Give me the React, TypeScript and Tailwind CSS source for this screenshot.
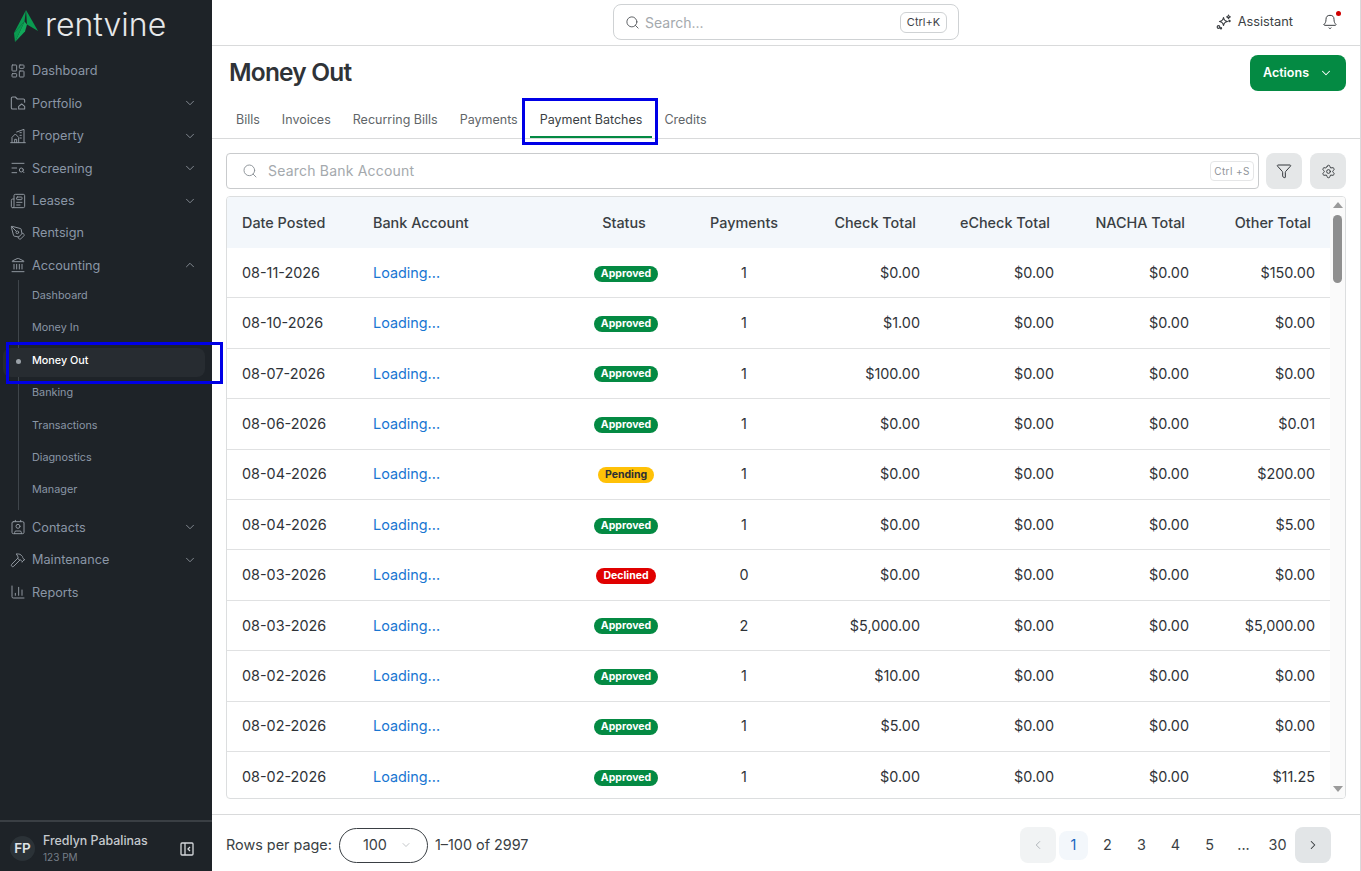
import {
  Bell,
  ChartColumn,
  ChevronDown,
  ChevronLeft,
  ChevronRight,
  ChevronUp,
  Contact,
  Funnel,
  Hammer,
  Landmark,
  LayoutDashboard,
  Newspaper,
  PenTool,
  Search,
  Settings,
  TextSearch,
} from 'lucide-react'
import type { ReactNode } from 'react'

const FolderHome = () => (
  <svg width="16" height="16" viewBox="0 0 24 24" fill="none" stroke="currentColor" strokeWidth="1.6" strokeLinecap="round" strokeLinejoin="round">
    <path d="M10 21H4a2 2 0 0 1-2-2V5a2 2 0 0 1 2-2h4l3 3h9a2 2 0 0 1 2 2v3" />
    <path d="M13 17l4.500-3.500L22 17v4h-9z" />
  </svg>
)

const PropertyIcon = () => (
  <svg width="16" height="16" viewBox="0 0 24 24" fill="none" stroke="currentColor" strokeWidth="1.5" strokeLinecap="round" strokeLinejoin="round">
    <path d="M1 22h22" />
    <path d="M3 22v-8l5-5 5 5v8" />
    <path d="M10 6l11-4v20" />
    <path d="M15 7h2M15 11h2M15 15h2M7 22v-5h3v5" />
  </svg>
)

const CollapseIcon = () => (
  <svg width="14" height="14" viewBox="0 0 14 14" fill="none" stroke="currentColor" strokeWidth="1.3">
    <rect x="1" y="1" width="12" height="12" rx="1" />
    <path d="M5 1v12" />
    <path d="M10 5L8 7l2 2" />
  </svg>
)

const AssistantIcon = () => (
  <svg width="16" height="16" viewBox="0 0 16 16" fill="none" stroke="#3b3f43" strokeWidth="1.2" strokeLinejoin="round">
    <path d="M7.500 3.500c.4 2.700 1.300 3.600 4 4-2.700.4-3.600 1.300-4 4-.4-2.700-1.300-3.600-4-4 2.700-.4 3.600-1.300 4-4z" />
    <path d="M12.500 1c.2 1.200.6 1.600 1.800 1.800-1.200.2-1.600.6-1.800 1.800-.2-1.200-.6-1.600-1.800-1.800 1.200-.2 1.600-.6 1.800-1.800z" />
    <circle cx="2.500" cy="13" r="1.300" />
    <circle cx="5" cy="14.300" r=".6" />
    <circle cx="13.500" cy="7" r=".6" />
  </svg>
)

const Logo = () => (
  <svg width="24" height="32" viewBox="0 0 24 32" fill="none">
    <path d="M12 0L24 21 13 14.500z" fill="#0a9a50" />
    <path d="M12 0L10.500 11.500 0 23z" fill="#0a9a50" />
    <path d="M10.500 11.500L13 14.500l-2 7L1 32z" fill="#12a85a" />
    <path d="M0 23L10.500 11.500 1 32z" fill="#0a9a50" />
  </svg>
)

interface NavEntry {
  label: string
  icon: ReactNode
  caret?: 'down' | 'up'
}

const topNav: NavEntry[] = [
  { label: 'Dashboard', icon: <LayoutDashboard size={16} strokeWidth={1.5} /> },
  { label: 'Portfolio', icon: <FolderHome />, caret: 'down' },
  { label: 'Property', icon: <PropertyIcon />, caret: 'down' },
  { label: 'Screening', icon: <TextSearch size={16} strokeWidth={1.5} />, caret: 'down' },
  { label: 'Leases', icon: <Newspaper size={16} strokeWidth={1.5} />, caret: 'down' },
  { label: 'Rentsign', icon: <PenTool size={16} strokeWidth={1.5} /> },
  { label: 'Accounting', icon: <Landmark size={16} strokeWidth={1.5} />, caret: 'up' },
]

const bottomNav: NavEntry[] = [
  { label: 'Contacts', icon: <Contact size={16} strokeWidth={1.5} />, caret: 'down' },
  { label: 'Maintenance', icon: <Hammer size={16} strokeWidth={1.5} />, caret: 'down' },
  { label: 'Reports', icon: <ChartColumn size={16} strokeWidth={1.5} /> },
]

const subNav = ['Dashboard', 'Money In', 'Money Out', 'Banking', 'Transactions', 'Diagnostics', 'Manager']

const tabs = ['Bills', 'Invoices', 'Recurring Bills', 'Payments', 'Payment Batches', 'Credits']

type Status = 'Approved' | 'Pending' | 'Declined'

const rows: [string, Status, string, string, string, string, string][] = [
  ['08-11-2026', 'Approved', '1', '$0.00', '$0.00', '$0.00', '$150.00'],
  ['08-10-2026', 'Approved', '1', '$1.00', '$0.00', '$0.00', '$0.00'],
  ['08-07-2026', 'Approved', '1', '$100.00', '$0.00', '$0.00', '$0.00'],
  ['08-06-2026', 'Approved', '1', '$0.00', '$0.00', '$0.00', '$0.01'],
  ['08-04-2026', 'Pending', '1', '$0.00', '$0.00', '$0.00', '$200.00'],
  ['08-04-2026', 'Approved', '1', '$0.00', '$0.00', '$0.00', '$5.00'],
  ['08-03-2026', 'Declined', '0', '$0.00', '$0.00', '$0.00', '$0.00'],
  ['08-03-2026', 'Approved', '2', '$5,000.00', '$0.00', '$0.00', '$5,000.00'],
  ['08-02-2026', 'Approved', '1', '$10.00', '$0.00', '$0.00', '$0.00'],
  ['08-02-2026', 'Approved', '1', '$5.00', '$0.00', '$0.00', '$0.00'],
  ['08-02-2026', 'Approved', '1', '$0.00', '$0.00', '$0.00', '$11.25'],
]

const statusClass: Record<Status, string> = {
  Approved: 'bg-[#048a43] text-white',
  Pending: 'bg-[#ffc107] text-[#2c2f33]',
  Declined: 'bg-[#e00000] text-white',
}

const gridCols = 'grid grid-cols-[130px_203px_130px_108px_137px_134px_135px_126px] items-center'

function NavRow({ entry }: { entry: NavEntry }) {
  return (
    <div className="flex h-[32.4px] items-center pl-[10px] pr-[15px] text-[12.7px] text-[#8a96a6]">
      <span className="flex w-[22px] shrink-0 text-[#8f969e]">{entry.icon}</span>
      <span className="flex-1">{entry.label}</span>
      {entry.caret === 'down' && <ChevronDown size={14} strokeWidth={1.5} className="text-[#8f969e]" />}
      {entry.caret === 'up' && <ChevronUp size={14} strokeWidth={1.5} className="text-[#8f969e]" />}
    </div>
  )
}

function Sidebar() {
  return (
    <aside className="flex h-full w-[212px] shrink-0 flex-col bg-[#1e2328]">
      <div className="flex h-[54.8px] items-center gap-[7px] pb-[3px] pl-[14px]">
        <Logo />
        <span className="pb-[2px] text-[32px] leading-none font-light text-[#e6e8ea]">rentvine</span>
      </div>
      <nav className="flex-1">
        {topNav.map((entry) => (
          <NavRow key={entry.label} entry={entry} />
        ))}
        <div className="mt-[-1.6px] mb-[1px] ml-[18px] border-l border-[#3f454b] pb-[3.5px]">
          {subNav.map((label) =>
            label === 'Money Out' ? (
              <div key={label} className="relative flex h-[32.4px] items-center pl-[13px] text-[10.8px] font-medium text-white">
                <span className="absolute top-[3px] -left-[16px] h-[29px] w-[202px] rounded-lg bg-[#272c31]" />
                <span className="absolute top-[14px] -left-[3px] h-[5px] w-[5px] rounded-full bg-[#9aa1a8]" />
                <span className="relative">{label}</span>
              </div>
            ) : (
              <div key={label} className="flex h-[32.4px] items-center pl-[13px] text-[10.8px] text-[#8a96a6]">
                {label}
              </div>
            ),
          )}
        </div>
        {bottomNav.map((entry) => (
          <NavRow key={entry.label} entry={entry} />
        ))}
      </nav>
      <div className="flex h-[51px] items-center border-t-2 border-[#3a3f44] pt-[4px] pr-[18px] pl-[10px]">
        <div className="flex h-[25px] w-[25px] items-center justify-center rounded-full bg-[#2b3237] text-[13.5px] font-semibold text-[#dfe2e5]">
          FP
        </div>
        <div className="ml-[8px] flex-1 leading-none">
          <div className="text-[12.4px] font-medium text-[#c5c9ce]">Fredlyn Pabalinas</div>
          <div className="mt-[4px] text-[10px] text-[#777f88]">123 PM</div>
        </div>
        <span className="text-[#d5d8db]">
          <CollapseIcon />
        </span>
      </div>
    </aside>
  )
}

function TopBar() {
  return (
    <header className="relative flex h-[46px] shrink-0 items-start justify-center border-b border-[#d9dadb] pt-[4px]">
      <div className="flex h-[36px] w-[346px] items-center rounded-lg border border-[#cfd2d4] pr-[11px] pl-[11px]">
        <Search size={15} strokeWidth={1.5} className="text-[#55595d]" />
        <span className="ml-[5px] flex-1 text-[14px] text-[#a4a9ad]">Search...</span>
        <span className="flex h-[21px] w-[47px] items-center justify-center rounded-md border border-[#cfd2d4] text-[11px] text-[#3f4347]">Ctrl+K</span>
      </div>
      <div className="absolute top-0 right-0 flex h-[44px] items-center pr-[22px]">
        <AssistantIcon />
        <span className="ml-[6px] text-[12.8px] text-[#3b3f43]">Assistant</span>
        <span className="relative ml-[29px] flex">
          <Bell size={16} strokeWidth={1.5} className="text-[#3b3f43]" />
          <span className="absolute -top-[3px] -right-[3px] h-[5px] w-[5px] rounded-full bg-[#d00000]" />
        </span>
      </div>
    </header>
  )
}

function PageHeader() {
  return (
    <div className="shrink-0 border-b border-[#d9dadb]">
      <div className="flex h-[56px] items-start justify-between pt-[9px] pr-[14px] pl-[17px]">
        <h1 className="-mt-px text-[24.500px] leading-[36px] font-semibold tracking-[-0.8px] text-[#2f3338]">Money Out</h1>
        <button className="flex h-[36px] w-[96px] items-center justify-center gap-[10px] rounded-lg bg-[#048a43] text-[12.500px] font-semibold text-white">
          Actions
          <ChevronDown size={14} strokeWidth={1.8} />
        </button>
      </div>
      <div className="flex gap-[2px] pl-[14px]">
        {tabs.map((tab) => (
          <div
            key={tab}
            className={
              tab === 'Payment Batches'
                ? 'flex h-[36px] items-center border-b-2 border-[#048a43] px-[10px] pt-[2px] text-[12.5px] text-[#3a3f44]'
                : 'flex h-[36px] items-center border-b-2 border-transparent px-[10px] pt-[2px] text-[12.5px] text-[#5f6569]'
            }
          >
            {tab}
          </div>
        ))}
      </div>
    </div>
  )
}

function Toolbar() {
  return (
    <div className="mt-[14px] flex h-[36px] shrink-0 gap-[7px] pr-[14px] pl-[14px]">
      <div className="flex flex-1 items-center rounded border border-[#c9cbcd] pr-[4px] pl-[15px]">
        <Search size={16} strokeWidth={1.4} className="text-[#8a9096]" />
        <span className="ml-[10px] flex-1 pb-[2px] text-[14px] tracking-[0.2px] text-[#a4a9ad]">Search Bank Account</span>
        <span className="flex h-[20px] w-[44px] items-center justify-center rounded border border-[#e5e6e7] text-[10px] tracking-[0.4px] text-[#8f9499]">Ctrl +S</span>
      </div>
      <button className="flex h-[36px] w-[36px] items-center justify-center rounded-lg bg-[#e5e7e8] text-[#33373b]">
        <Funnel size={16} strokeWidth={1.5} />
      </button>
      <button className="ml-[1px] flex h-[36px] w-[36px] items-center justify-center rounded-lg bg-[#e5e7e8] text-[#33373b]">
        <Settings size={15} strokeWidth={1.5} />
      </button>
    </div>
  )
}

function Scrollbar() {
  return (
    <div className="flex w-[15px] shrink-0 flex-col items-center bg-[#fafafa]">
      <span className="mt-[5px] h-0 w-0 border-x-[5px] border-b-[6px] border-x-transparent border-b-[#9a9a9a]" />
      <span className="mt-[7px] h-[68px] w-[9px] rounded-full bg-[#8f8f8f]" />
      <span className="mt-auto mb-[6px] h-0 w-0 border-x-[5px] border-t-[6px] border-x-transparent border-t-[#9a9a9a]" />
    </div>
  )
}

function Table() {
  return (
    <div className="mt-[7px] mr-[14px] ml-[14px] flex h-[603px] shrink-0 overflow-hidden rounded border border-[#dcdedf]">
      <div className="w-[1103px] shrink-0 overflow-hidden text-[14.4px] text-[#2f3338]">
        <div className={`${gridCols} h-[51px] bg-[#f3f7fb] font-medium text-[#3a3f44]`}>
          <div className="pl-[15px]">Date Posted</div>
          <div className="pl-[16px]">Bank Account</div>
          <div className="pr-[2px] text-center">Status</div>
          <div className="text-center">Payments</div>
          <div className="pr-[19px] text-right">Check Total</div>
          <div className="pr-[19px] text-right">eCheck Total</div>
          <div className="pr-[19px] text-right">NACHA Total</div>
          <div className="pr-[19px] text-right">Other Total</div>
        </div>
        {rows.map((row, i) => (
          <div key={i} className={`${gridCols} h-[50.4px] border-b border-[#e0e1e2]`}>
            <div className="pl-[15px]">{row[0]}</div>
            <div className="pl-[16px] text-[#1976d2]">Loading...</div>
            <div className="flex justify-center pt-[2px] pl-[2px]">
              <span className={`rounded-full px-[7px] text-[10.5px] leading-[16px] font-bold ${statusClass[row[1]]}`}>{row[1]}</span>
            </div>
            <div className="text-center">{row[2]}</div>
            <div className="pr-[15px] text-right">{row[3]}</div>
            <div className="pr-[15px] text-right">{row[4]}</div>
            <div className="pr-[15px] text-right">{row[5]}</div>
            <div className="pr-[15px] text-right">{row[6]}</div>
          </div>
        ))}
      </div>
      <Scrollbar />
    </div>
  )
}

function Footer() {
  return (
    <div className="mt-[15px] flex flex-1 items-center justify-between border-t border-[#d9dadb] pt-[4px] pr-[29px] pl-[14px] text-[14.4px] text-[#3a3f44]">
      <div className="flex items-center">
        <span>Rows per page:</span>
        <div className="mr-[7px] ml-[7px] flex h-[35px] w-[89px] items-center rounded-full border border-[#3a3f44] pl-[23px]">
          <span>100</span>
          <ChevronDown size={12} strokeWidth={1.2} className="ml-[13px] text-[#9aa0a5]" />
        </div>
        <span>1–100 of 2997</span>
      </div>
      <div className="flex items-center">
        <button className="mr-[3px] flex h-[36px] w-[36px] items-center justify-center rounded-lg bg-[#f1f3f4] text-[#a6abb0]">
          <ChevronLeft size={14} strokeWidth={1.5} />
        </button>
        <div className="flex items-center gap-[5px]">
          {['1', '2', '3', '4', '5', '...', '30'].map((p) => (
            <span
              key={p}
              className={
                p === '1'
                  ? 'flex h-[29px] w-[29px] items-center justify-center rounded-lg bg-[#f3f7fb] text-[#1565c0]'
                  : 'flex h-[29px] w-[29px] items-center justify-center rounded-lg'
              }
            >
              {p}
            </span>
          ))}
        </div>
        <button className="ml-[3px] flex h-[36px] w-[36px] items-center justify-center rounded-lg bg-[#e2e5e7] text-[#33373b]">
          <ChevronRight size={14} strokeWidth={1.8} />
        </button>
      </div>
    </div>
  )
}

export default function App() {
  return (
    <div className="relative flex h-[871px] w-[1361px] overflow-hidden bg-white font-['Inter',sans-serif]">
      <Sidebar />
      <main className="flex min-w-0 flex-1 flex-col border-r border-[#d9dadb]">
        <TopBar />
        <PageHeader />
        <Toolbar />
        <Table />
        <Footer />
      </main>
      {/* annotation boxes drawn over the screenshot */}
      <div className="absolute top-[98px] left-[522px] h-[47px] w-[136px] border-[3px] border-[#0000e6]" />
      <div className="absolute top-[342px] left-[6px] h-[42px] w-[217px] border-[3px] border-[#0000e6]" />
    </div>
  )
}
